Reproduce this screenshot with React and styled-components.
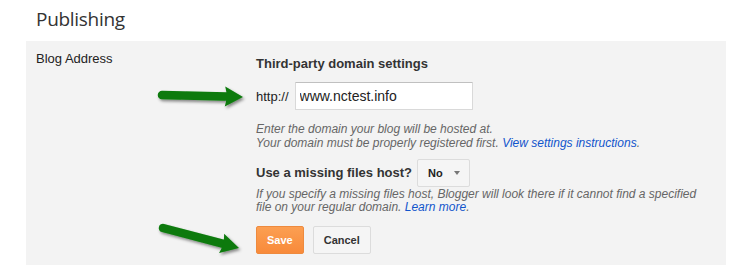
import React from 'react'
import styled, { createGlobalStyle } from 'styled-components'

const GlobalStyle = createGlobalStyle`
    body {
        margin: 0;
        background: #fff;
        font-family: Arial, "Liberation Sans", sans-serif;
        color: #222;
    }
`

const Page = styled.div`
    position: relative;
    width: 753px;
    height: 280px;
    overflow: hidden;
`

const Title = styled.h1`
    margin: 6px 0 8px 36px;
    font-family: "Open Sans", "Liberation Sans", sans-serif;
    font-size: 19px;
    font-weight: 400;
    letter-spacing: -0.3px;
    line-height: 27px;
    color: #333;
`

const Panel = styled.div`
    display: grid;
    grid-template-columns: 220px 1fr;
    width: 680px;
    margin-left: 26px;
    padding: 10px 10px 11px;
    background: #f3f3f3;
`

const FieldLabel = styled.div`
    font-size: 13px;
    line-height: 16px;
    color: #222;
`

const Settings = styled.div`
    display: flex;
    flex-direction: column;
    align-items: flex-start;
    padding-top: 5px;
`

const Heading = styled.div`
    font-size: 13px;
    font-weight: 700;
    line-height: 16px;
    color: #333;
`

const Row = styled.div`
    display: flex;
    align-items: center;
    gap: ${p => p.$gap || 6}px;
    margin-top: ${p => p.$top || 0}px;
`

const Prefix = styled.span`
    font-size: 13px;
    color: #222;
`

const TextInput = styled.input`
    box-sizing: border-box;
    width: 178px;
    height: 28px;
    padding: 0 4px;
    border: 1px solid #d9d9d9;
    border-top-color: #c0c0c0;
    border-radius: 1px;
    background: #fff;
    font-family: Arial, "Liberation Sans", sans-serif;
    font-size: 14px;
    color: #222;
    outline: none;
`

const Help = styled.div`
    margin-top: ${p => p.$top}px;
    font-size: 12px;
    font-style: italic;
    line-height: ${p => p.$lh}px;
    color: #666;

    a {
        color: #15c;
        text-decoration: none;
    }
`

const Select = styled.div`
    box-sizing: border-box;
    display: flex;
    align-items: center;
    gap: 11px;
    width: 53px;
    height: 28px;
    padding-left: 10px;
    border: 1px solid #dcdcdc;
    border-radius: 2px;
    background: #f5f5f5;
    font-size: 11px;
    font-weight: 700;
    color: #222;
`

const Caret = styled.span`
    width: 0;
    height: 0;
    border-left: 3.5px solid transparent;
    border-right: 3.5px solid transparent;
    border-top: 4px solid #777;
`

const Button = styled.button`
    box-sizing: border-box;
    height: 28px;
    padding: 0 10px;
    border: 1px solid ${p => (p.$primary ? '#ee8a3e' : '#dcdcdc')};
    border-radius: 2px;
    background: ${p => (p.$primary ? 'linear-gradient(#fc9f52, #f88a3a)' : '#f5f5f5')};
    color: ${p => (p.$primary ? '#fff' : '#333')};
    font-family: Arial, "Liberation Sans", sans-serif;
    font-size: 11px;
    font-weight: 700;
`

const Arrows = styled.svg`
    position: absolute;
    top: 0;
    left: 0;
    pointer-events: none;
`

function GreenArrow({ x1, y1, x2, y2, head = 18, wing = 10 }) {
    const dx = x2 - x1
    const dy = y2 - y1
    const len = Math.hypot(dx, dy)
    const ux = dx / len
    const uy = dy / len
    const bx = x2 - ux * head
    const by = y2 - uy * head
    const px = -uy
    const py = ux
    const pts = [
        [bx + px * wing, by + py * wing],
        [x2, y2],
        [bx - px * wing, by - py * wing],
    ]
    return (
        <g filter="url(#shade)">
            <line x1={x1} y1={y1} x2={bx + ux * 2} y2={by + uy * 2} stroke="#0a7a0a" strokeWidth="8.5" strokeLinecap="round" />
            <path
                d={`M${pts[0][0]} ${pts[0][1]} L${pts[1][0]} ${pts[1][1]} L${pts[2][0]} ${pts[2][1]} Q${bx + ux * 3} ${by + uy * 3} ${pts[0][0]} ${pts[0][1]} Z`}
                fill="#0a7a0a"
            />
        </g>
    )
}

export default function App() {
    return (
        <Page>
            <GlobalStyle />
            <Title>Publishing</Title>
            <Panel>
                <FieldLabel>Blog Address</FieldLabel>
                <Settings>
                    <Heading>Third-party domain settings</Heading>
                    <Row $top={10}>
                        <Prefix>http://</Prefix>
                        <TextInput defaultValue="www.nctest.info" />
                    </Row>
                    <Help $top={12} $lh={14}>
                        Enter the domain your blog will be hosted at.
                        <br />
                        Your domain must be properly registered first. <a href="#">View settings instructions</a>.
                    </Help>
                    <Row $top={9} $gap={5}>
                        <Heading>Use a missing files host?</Heading>
                        <Select>
                            No
                            <Caret />
                        </Select>
                    </Row>
                    <Help $top={1} $lh={13}>
                        If you specify a missing files host, Blogger will look there if it cannot find a specified
                        <br />
                        file on your regular domain. <a href="#">Learn more</a>.
                    </Help>
                    <Row $top={12} $gap={9}>
                        <Button $primary>Save</Button>
                        <Button>Cancel</Button>
                    </Row>
                </Settings>
            </Panel>
            <Arrows width="753" height="280">
                <defs>
                    <filter id="shade" x="-20%" y="-50%" width="140%" height="200%">
                        <feDropShadow dx="1.5" dy="2" stdDeviation="1.5" floodColor="#000" floodOpacity="0.45" />
                    </filter>
                </defs>
                <GreenArrow x1={162} y1={95} x2={243} y2={97} />
                <GreenArrow x1={163} y1={228} x2={239} y2={248} />
            </Arrows>
        </Page>
    )
}
